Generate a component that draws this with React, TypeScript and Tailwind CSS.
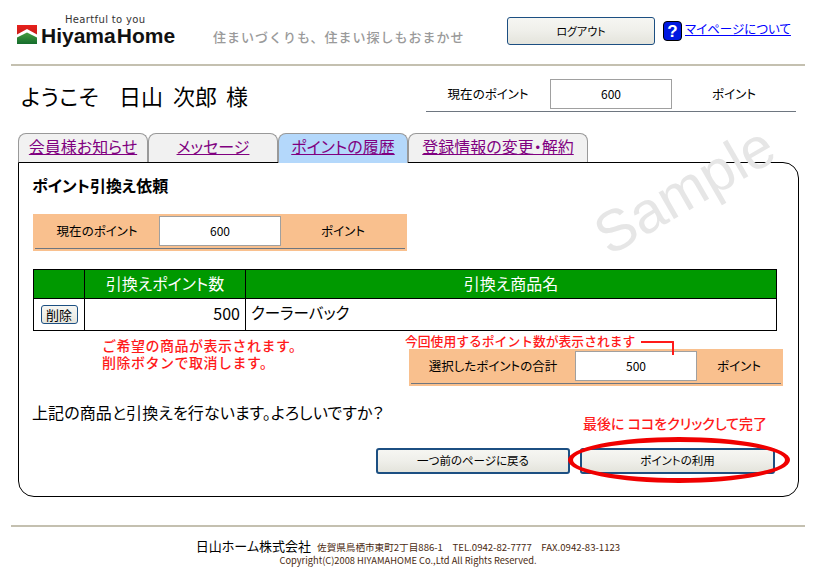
const Btn = ({ label, className }: { label: string; className: string }) => (
  <button className={`flex items-center justify-center rounded-[3px] border-[#1c4f82] bg-gradient-to-b from-[#f6f6f2] via-[#efefea] to-[#e4e4dc] text-black ${className}`}>
    {label}
  </button>
);

const Points = ({ label, value, labelW, unitW, className }: { label: string; value: string; labelW: string; unitW: string; className: string }) => (
  <div className={className}>
    <div className="flex items-center text-[12.5px] text-black">
      <div className={`text-center ${labelW}`}>{label}</div>
      <div className="flex h-[30px] w-[122px] items-center justify-center border border-[#a0a0a0] bg-white text-[12px]">{value}</div>
      <div className={`text-center ${unitW}`}>ポイント</div>
    </div>
    <div className="mt-[2px] h-[1px] bg-[#6e7680]" />
  </div>
);

const Logo = () => (
  <div className="relative h-[50px] w-[175px]">
    <div className="absolute left-[48px] top-[14px] font-['DejaVu_Sans',sans-serif] text-[10px] leading-[12px] tracking-[0.35px] text-[#333]">Heartful to you</div>
    <svg className="absolute left-0 top-[25px]" width="20" height="19" viewBox="0 0 20 19">
      <defs>
        <linearGradient id="r" x1="0" y1="0" x2="0" y2="1"><stop offset="0" stopColor="#e8201c" /><stop offset="1" stopColor="#a81c18" /></linearGradient>
        <linearGradient id="g" x1="0" y1="0" x2="0" y2="1"><stop offset="0" stopColor="#4aa040" /><stop offset="1" stopColor="#146c2c" /></linearGradient>
      </defs>
      <rect width="20" height="19" fill="url(#r)" />
      <path d="M0 19V11.5L10 6.5L20 11.5V19Z" fill="url(#g)" />
      <path d="M0 9.5L10 4L20 9.5V12.5L10 7.5L0 12.5Z" fill="#fff" />
    </svg>
    <div className="absolute left-[24px] top-[26px] font-['Liberation_Sans',sans-serif] text-[21px] font-bold leading-[20px] text-[#111]">Hiyama<span className="ml-[1px]">Home</span></div>
  </div>
);

export default function App() {
  return (
    <div className="relative h-[579px] w-[824px] overflow-hidden bg-white font-['Noto_Sans_CJK_JP',sans-serif] text-black [font-feature-settings:'palt']">
      <header className="ml-[11px] flex h-[66px] w-[794px] border-b-2 border-[#c4c0b0]">
        <div className="ml-[6px]"><Logo /></div>
        <div className="ml-[21px] mt-[28px] w-[251px] whitespace-nowrap text-[13px] font-medium leading-[18px] tracking-[1px] text-[#9a9a9a] [font-feature-settings:normal]">住まいづくりも、住まい探しもおまかせ</div>
        <Btn label="ログアウト" className="ml-[43px] mt-[17px] h-[28px] w-[148px] border text-[11px]" />
        <div className="ml-[8px] mt-[21px] flex h-[20px] w-[19px] items-center justify-center rounded-[4px] border border-black bg-[#0018e0] font-['Liberation_Sans',sans-serif] text-[17px] font-bold leading-none text-white">?</div>
        <a className="ml-[3px] mt-[20px] whitespace-nowrap text-[12.5px] leading-[18px] text-[#0000ff] underline">マイページについて</a>
      </header>

      <section className="mx-[21px] flex h-[47px] items-start justify-between">
        <h1 className="mt-[13px] flex whitespace-nowrap text-[22px] font-normal leading-[32px]">
          <span className="tracking-[0.4px]">ようこそ</span>
          <span className="ml-[20px]">日山</span>
          <span className="ml-[10px]">次郎</span>
          <span className="ml-[9px]">様</span>
        </h1>
        <Points label="現在のポイント" value="600" labelW="w-[124px]" unitW="w-[124px]" className="mr-[7px] mt-[13px] w-[370px]" />
      </section>

      <nav className="relative z-10 mx-[18px] mt-[20px] flex h-[30px] text-[16px] leading-[24px] text-[#800080]">
        {[
          ["会員様お知らせ", "w-[130px] bg-[#f1f1f1]"],
          ["メッセージ", "w-[130px] bg-[#f1f1f1]"],
          ["ポイントの履歴", "w-[130px] bg-[#b4d8fb]"],
          ["登録情報の変更・解約", "w-[180px] bg-[#f1f1f1]"],
        ].map(([t, c], i) => (
          <div key={t} className={`rounded-t-[8px] border border-b-0 border-[#999] text-center ${c} ${i === 2 ? "h-[30px]" : "h-[29px]"}`}>
            <a className="underline">{t}</a>
          </div>
        ))}
      </nav>

      <main className="relative mx-[18px] -mt-[1px] h-[335px] w-[781px] rounded-[16px] rounded-tl-none border border-black">
        <div className="px-[13px]">
          <h2 className="mt-[11px] text-[16px] font-bold leading-[22px]">ポイント引換え依頼</h2>
          <Points label="現在のポイント" value="600" labelW="w-[124px]" unitW="w-[124px]" className="mt-[18px] ml-[1px] w-[374px] bg-[#f9c08e] p-[2px]" />
          <table className="mt-[18px] ml-[1px] w-[744px] table-fixed border-collapse border border-black text-[16px]">
            <colgroup><col className="w-[51px]" /><col className="w-[161px]" /><col /></colgroup>
            <thead>
              <tr className="h-[29px] bg-[#009900] text-white">
                <th className="border border-black pb-[2px] font-normal" />
                <th className="border border-black pb-[2px] font-normal">引換えポイント数</th>
                <th className="border border-black pb-[2px] font-normal">引換え商品名</th>
              </tr>
            </thead>
            <tbody>
              <tr className="h-[32px]">
                <td className="border border-black"><Btn label="削除" className="mx-auto h-[19px] w-[37px] border text-[13px]" /></td>
                <td className="border border-black pb-[3px] pr-[5px] text-right">500</td>
                <td className="border border-black pb-[3px] pl-[5px] text-[15.5px]">クーラーバック</td>
              </tr>
            </tbody>
          </table>

          <div className="flex">
            <p className="ml-[70px] mt-[6px] w-[303px] shrink-0 text-[14px] font-medium leading-[17px] tracking-[0.5px] text-[#ff1a1a] [font-feature-settings:normal]">ご希望の商品が表示されます。<br />削除ボタンで取消します。</p>
            <div className="shrink-0">
              <div className="mt-[2px] h-[16px] whitespace-nowrap text-[12.8px] font-medium leading-[16px] text-[#ff1a1a] [font-feature-settings:normal]">今回使用するポイント数が表示されます</div>
              <Points label="選択したポイントの合計" value="500" labelW="w-[164px]" unitW="w-[84px]" className="ml-[4px] w-[374px] bg-[#f9c08e] p-[2px]" />
            </div>
          </div>

          <p className="mt-[15px] whitespace-nowrap text-[16px] leading-[22px] tracking-[0.1px]">上記の商品と引換えを行ないます。よろしいですか？</p>
          <div className="-mt-[10px] ml-[551px] whitespace-nowrap text-[14px] font-medium leading-[20px] text-[#ff1a1a]">最後に ココをクリックして完了</div>
          <div className="ml-[344px] mt-[15px] flex gap-[10px]">
            <Btn label="一つ前のページに戻る" className="h-[26px] w-[194px] border-2 text-[11.5px]" />
            <Btn label="ポイントの利用" className="h-[26px] w-[195px] border-2 text-[11.5px]" />
          </div>
        </div>
        <div className="pointer-events-none absolute left-[549px] top-[274px] h-[46px] w-[222px] rounded-[50%] border-[5px] border-[#f00000]" />
        <div className="pointer-events-none absolute left-[622px] top-[178px] h-[14px] w-[33px] rounded-tr-[1px] border-r-2 border-t-2 border-[#ff1a1a]" />
      </main>

      <div className="pointer-events-none absolute left-[586px] top-[155px] -rotate-[30deg] font-['Liberation_Sans',sans-serif] text-[58px] leading-[70px] text-[#e6e6e6]">Sample</div>

      <footer className="ml-[11px] mt-[28px] w-[794px] border-t-2 border-[#c4c0b0] pt-[11px] text-center">
        <div className="flex items-baseline justify-center leading-[16px]">
          <span className="text-[13px]">日山ホーム株式会社</span>
          <span className="ml-[6px] text-[9.6px] text-[#4a2a10]">佐賀県鳥栖市東町2丁目886-1　TEL.0942-82-7777　FAX.0942-83-1123</span>
        </div>
        <div className="text-[9.3px] leading-[11px] text-[#4a2a10]">Copyright(C)2008 HIYAMAHOME Co.,Ltd All Rights Reserved.</div>
      </footer>
    </div>
  );
}
